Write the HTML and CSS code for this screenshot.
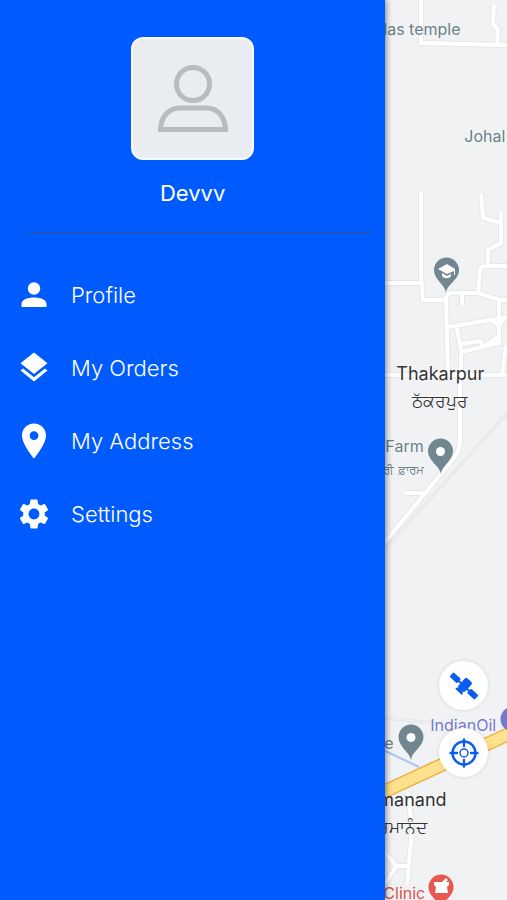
FILE: index.html
```html
<!DOCTYPE html>
<html lang="en">
<head>
    <meta charset="UTF-8">
    <meta name="viewport" content="width=device-width, initial-scale=1.0">
    <title>Menu</title>
    <link rel="stylesheet" href="styles.css">
</head>
<body>
    <div class="app">
        <aside class="drawer">
            <div class="user">
                <div class="avatar">
                    <svg width="70" height="68" viewBox="0 0 70 68" fill="none" stroke="#b9bcbe" stroke-width="5">
                        <circle cx="35" cy="19" r="16.5"/>
                        <path d="M2.500 64.500C3 51 11 43 22 43H48C59 43 67 51 67.500 64.500Z"/>
                    </svg>
                </div>
                <h1 class="user-name">Devvv</h1>
            </div>

            <nav class="menu">
                <a class="menu-item" href="#profile">
                    <svg class="menu-icon" viewBox="0 0 36 36" fill="#fff">
                        <circle cx="18" cy="11.500" r="6.200"/>
                        <path d="M5.500 30V27C5.500 22.500 12 20.500 18 20.500S30.500 22.500 30.500 27V30Z"/>
                    </svg>
                    <span>Profile</span>
                </a>
                <a class="menu-item" href="#orders">
                    <svg class="menu-icon" viewBox="0 0 36 36" fill="#fff">
                        <path d="M18 2.500L31.500 13.200L18 24L4.500 13.200Z"/>
                        <path d="M4.500 20.500L7 18.600L18 27.200L29 18.600L31.500 20.500L18 31.500Z"/>
                    </svg>
                    <span>My Orders</span>
                </a>
                <a class="menu-item" href="#address">
                    <svg class="menu-icon" viewBox="0 0 36 36" fill="#fff">
                        <path fill-rule="evenodd" d="M18 0.500C11.300 0.500 6 5.800 6 12.500C6 21.500 18 35.500 18 35.500S30 21.500 30 12.500C30 5.800 24.700 0.500 18 0.500ZM18 17A4.400 4.400 0 1 1 18 8.200A4.400 4.400 0 0 1 18 17Z"/>
                    </svg>
                    <span>My Address</span>
                </a>
                <a class="menu-item" href="#settings">
                    <svg class="menu-icon" viewBox="0 0 24 24" fill="#fff">
                        <path d="M19.140 12.940c.04-.3.060-.61.060-.94 0-.32-.02-.64-.07-.94l2.030-1.580c.18-.14.230-.41.120-.61l-1.920-3.320c-.12-.22-.37-.29-.59-.22l-2.390.96c-.5-.38-1.030-.7-1.620-.94l-.36-2.540c-.04-.24-.24-.41-.48-.41h-3.840c-.24 0-.43.17-.47.410l-.36 2.540c-.59.240-1.130.57-1.620.940l-2.390-.96c-.22-.08-.47 0-.59.220L2.740 8.870c-.12.210-.08.470.120.610l2.030 1.580c-.05.3-.09.630-.09.940s.02.640.070.940l-2.030 1.580c-.18.140-.23.410-.12.610l1.920 3.320c.12.220.37.290.59.220l2.390-.96c.5.380 1.030.7 1.620.940l.36 2.540c.05.240.24.410.48.410h3.840c.24 0 .44-.17.470-.41l.36-2.540c.59-.24 1.130-.56 1.620-.94l2.390.96c.22.080.47 0 .59-.22l1.920-3.320c.12-.22.070-.47-.12-.61l-2.010-1.580zM12 15.600c-1.980 0-3.600-1.620-3.600-3.600s1.620-3.600 3.600-3.600 3.600 1.620 3.600 3.600-1.620 3.600-3.600 3.600z"/>
                    </svg>
                    <span>Settings</span>
                </a>
            </nav>
        </aside>

        <main class="map">
            <svg class="map-canvas" width="122" height="900" viewBox="0 0 122 900" fill="none">
                <defs>
                    <g id="roads">
                        <path d="M36-2V43L124 45M112 44L113 29L108 24L109 5"/>
                        <path d="M36 192V276L38 300H61M0 283H36M61 300C61 296 63 294 66 293H93L115 300H124M77 293V305"/>
                        <path d="M96 194L98 218L116 223M116 212V243L103 250V265M93 293L95 270C95 267 97 266 101 266H124"/>
                        <path d="M61 300L63 375M63 327L124 317M72 328L76 350V375M76 352L114 343V298M76 344L95 341L98 347L115 336M106 320L114 326L119 318M121 345L117 375"/>
                        <path d="M0 375H124M75 374V440C75 448 73 453 69 458L0 542M20 493H38"/>
                        <path d="M23 792L27 830L22 885M0 852L11 866H26M11 866L0 884"/>
                    </g>
                </defs>
                <path d="M124 411L0 549M0 718L60 724" stroke="#e2e4e6" stroke-width="3"/>
                <path d="M124 411L0 549M0 718L60 724" stroke="#f5f6f7"/>
                <use href="#roads" stroke="#e5e7e9" stroke-width="6"/>
                <use href="#roads" stroke="#fff" stroke-width="4"/>
                <path d="M0 751L34 767" stroke="#a9c3f5" stroke-width="2"/>
                <path d="M-4 793L126 733" stroke="#edb044" stroke-width="14"/>
                <path d="M-4 793L126 733" stroke="#ffe08c" stroke-width="11"/>

                <path d="M61 293C60 284 49 280 49 270A12.500 12.500 0 0 1 74 270C74 280 62 284 61 293Z" fill="#71878f"/>
                <path d="M53 269L62 264L70 269V275H69V271L62 274ZM57 273L62 276L66 274V276C64 279 59 279 57 276Z" fill="#fff"/>
                <path d="M56 474C54 465 43 461 43 451A12.500 12.500 0 0 1 68 451C68 461 57 465 56 474Z" fill="#71878f"/>
                <circle cx="55.500" cy="451.500" r="4.500" fill="#fff"/>
                <path d="M26 760C24 751 13.500 747 13.500 737A12.500 12.500 0 0 1 38.500 737C38.500 747 27 751 26 760Z" fill="#71878f"/>
                <circle cx="26" cy="737.500" r="4.500" fill="#fff"/>
                <circle cx="128" cy="719" r="12.500" fill="#7379cd"/>
                <path d="M56 910C55 901 43.500 897 43.500 887A12.500 12.500 0 0 1 68.500 887C68.500 897 57 901 56 910Z" fill="#e85750"/>
                <path d="M49 882H57L61 878L63 880L61 882H64V885L62 887L63 893H50L51 887L49 885Z" fill="#fff"/>
            </svg>

            <span class="label poi temple">las temple</span>
            <span class="label poi johal">Johal</span>
            <span class="label town thakarpur">Thakarpur<br><span lang="pa">ਠੱਕਰਪੁਰ</span></span>
            <span class="label poi farm">Farm<br><small lang="pa">ਰੀ ਫ਼ਾਰਮ</small></span>
            <span class="label fuel">IndianOil</span>
            <span class="label poi store">e</span>
            <span class="label town manand">manand<br><span lang="pa">ਰਮਾਨੰਦ</span></span>
            <span class="label clinic">Clinic</span>

            <div class="map-buttons">
                <button class="map-button" type="button" aria-label="Satellite view">
                    <svg width="28" height="28" viewBox="0 0 28 28" fill="#0b5cf0">
                        <g transform="rotate(43 14 14)">
                            <rect x="-3" y="11" width="10" height="6" rx="1"/>
                            <rect x="21" y="11" width="10" height="6" rx="1"/>
                            <rect x="6" y="13" width="16" height="2"/>
                            <rect x="9.500" y="6" width="9" height="13" rx="2"/>
                            <path d="M9.500 22C9.500 19.500 11 18.500 14 18.500S18.500 19.500 18.500 22Z"/>
                        </g>
                    </svg>
                </button>
                <button class="map-button" type="button" aria-label="My location">
                    <svg width="30" height="30" viewBox="0 0 30 30" fill="none" stroke="#0b5cf0" stroke-width="2.400" stroke-linecap="round">
                        <circle cx="15" cy="15" r="11.500"/>
                        <circle cx="15" cy="15" r="4" stroke-width="1.500"/>
                        <path d="M15 1.500V8M15 22V28.500M1.500 15H8M22 15H28.500"/>
                    </svg>
                </button>
            </div>
        </main>
    </div>
</body>
</html>
```
FILE: styles.css
```css
* {
    box-sizing: border-box;
}
body {
    margin: 0;
    font-family: Inter, "Liberation Sans", sans-serif;
}
.app {
    display: flex;
    min-height: 100vh;
    overflow: hidden;
}

/* Side drawer */
.drawer {
    position: relative;
    z-index: 1;
    flex: 0 0 76%;
    padding: 37px 12px 20px 0;
    background: #005bff;
    color: #fff;
    box-shadow: 1px 0 6px rgba(0, 0, 0, 0.5);
}
.user {
    display: flex;
    flex-direction: column;
    align-items: center;
    margin-left: 26px;
    padding: 0 14px 24px 0;
    border-bottom: 2px solid #1c55bd;
}
.avatar {
    display: flex;
    align-items: center;
    justify-content: center;
    width: 123px;
    height: 123px;
    border: 2px solid #f8fafc;
    border-radius: 12px;
    background: #e9edf1;
}
.user-name {
    margin: 18px 0 0;
    font-size: 22px;
    line-height: 30px;
    font-weight: 400;
}
.menu {
    display: flex;
    flex-direction: column;
    gap: 37px;
    padding: 43px 0 0 16px;
}
.menu-item {
    display: flex;
    align-items: center;
    gap: 19px;
    color: #fff;
    font-size: 22px;
    line-height: 36px;
    font-weight: 300;
    text-decoration: none;
}
.menu-icon {
    width: 36px;
    height: 36px;
}

/* Map */
.map {
    position: relative;
    flex: 1;
    overflow: hidden;
    background: #f0f2f4;
}
.map-canvas {
    position: absolute;
    top: 0;
    left: 0;
}
.label {
    position: absolute;
    font-size: 16px;
    line-height: 22px;
    white-space: nowrap;
    text-shadow: 0 0 2px #fff;
}
.poi {
    color: #6a7f86;
}
.town {
    color: #333;
    font-size: 18px;
    line-height: 27px;
}
.town span {
    font-size: 17px;
}
.temple {
    top: 18px;
    left: -2px;
}
.johal {
    top: 125px;
    left: 79px;
}
.thakarpur {
    top: 360px;
    left: 11px;
    text-align: center;
}
.farm {
    top: 435px;
    left: -2px;
    text-align: right;
}
.farm small {
    font-size: 12px;
}
.fuel {
    top: 714px;
    left: 45px;
    color: #7379c9;
}
.store {
    top: 732px;
    left: -1px;
}
.manand {
    top: 786px;
    left: -7px;
}
.clinic {
    top: 882px;
    left: -2px;
    color: #dc4f4a;
}
.map-buttons {
    position: absolute;
    top: 661px;
    right: 19px;
    display: flex;
    flex-direction: column;
    gap: 18px;
}
.map-button {
    display: flex;
    align-items: center;
    justify-content: center;
    width: 49px;
    height: 49px;
    padding: 0;
    border: 0;
    border-radius: 50%;
    background: #fff;
    box-shadow: 0 0 4px rgba(0, 0, 0, 0.12);
}
```
